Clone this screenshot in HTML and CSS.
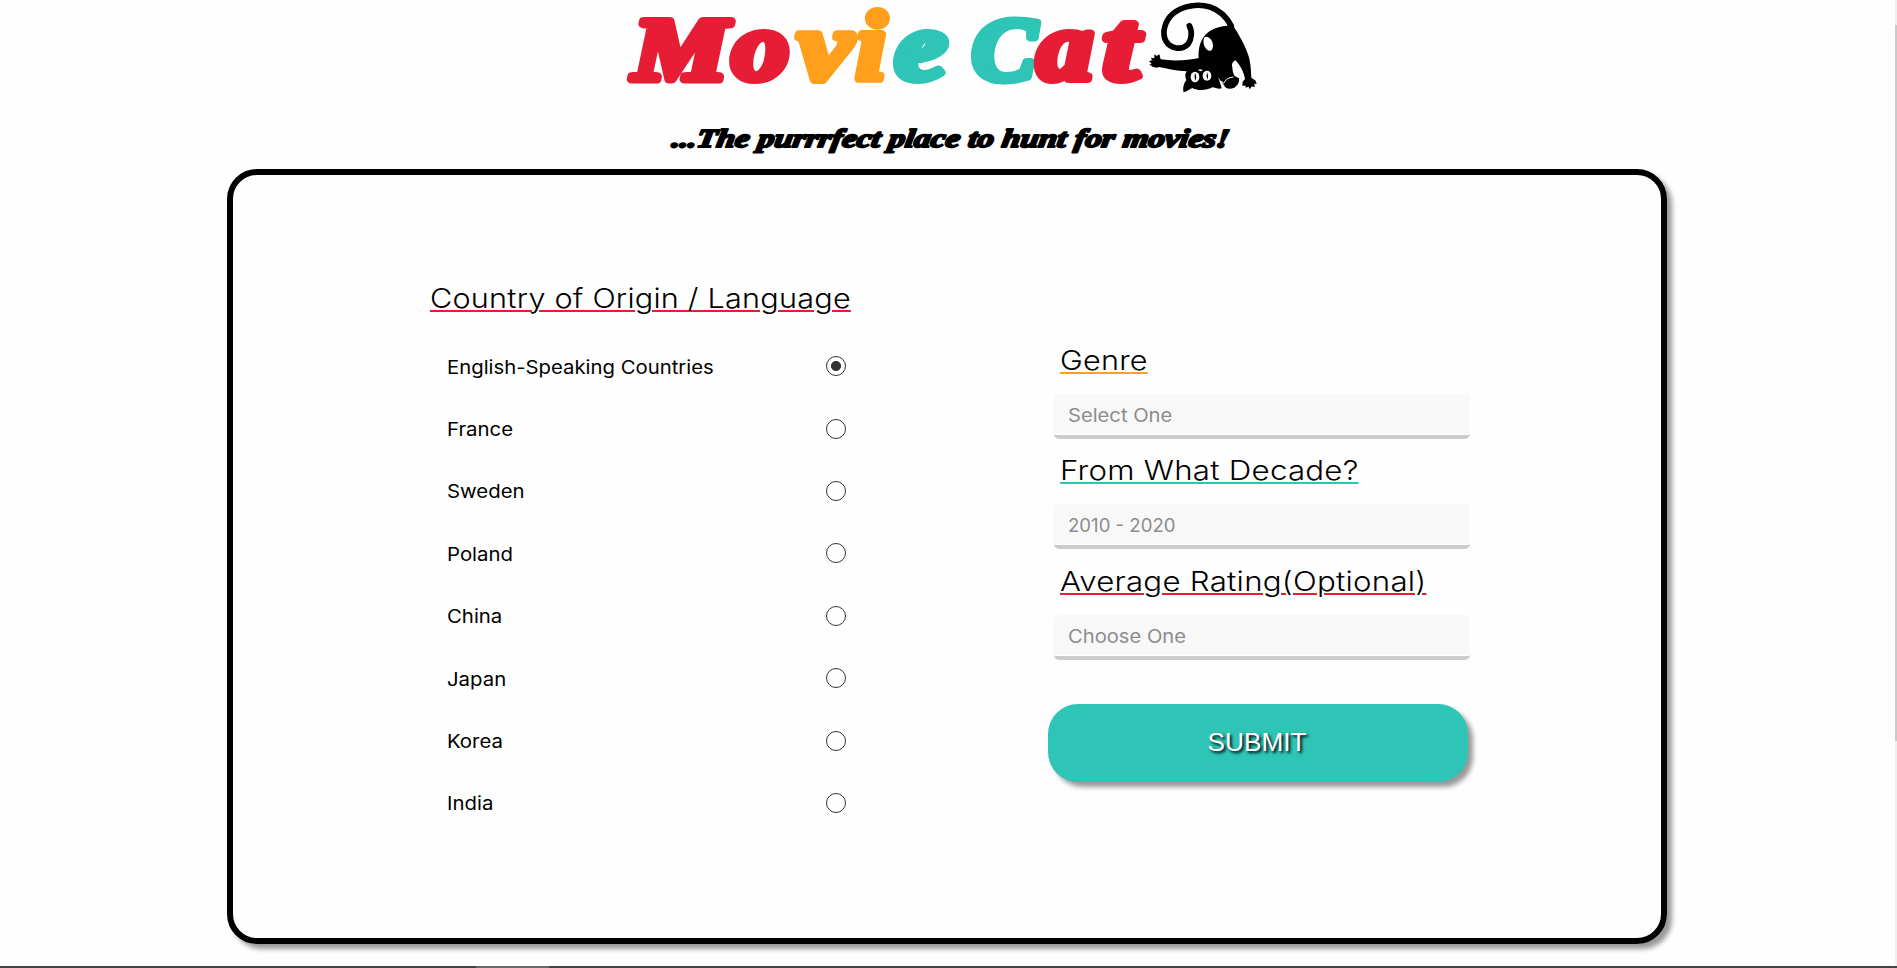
FILE: index.html
```html
<!DOCTYPE html>
<html lang="en">
<head>
<meta charset="utf-8">
<title>Movie Cat</title>
<link rel="stylesheet" href="styles.css">
</head>
<body>
<header class="header">
  <div class="brand">
    <svg class="wordmark" viewBox="620 0 520 120" width="520" height="120" role="img" aria-label="Movie Cat">
      <g class="letters" text-anchor="start">
        <text class="red cap" x="633" y="79" textLength="95" lengthAdjust="spacingAndGlyphs">M</text>
        <text class="red low" x="732" y="79" textLength="57" lengthAdjust="spacingAndGlyphs">o</text>
        <text class="orange low" x="798" y="79" textLength="54" lengthAdjust="spacingAndGlyphs">v</text>
        <text class="orange low" x="856" y="79" textLength="30" lengthAdjust="spacingAndGlyphs">i</text>
        <text class="teal low" x="895" y="79" textLength="52" lengthAdjust="spacingAndGlyphs">e</text>
        <text class="teal cap" x="972" y="79" textLength="64" lengthAdjust="spacingAndGlyphs">C</text>
        <text class="red low" x="1037" y="79" textLength="56" lengthAdjust="spacingAndGlyphs">a</text>
        <text class="red low" x="1103" y="79" textLength="35" lengthAdjust="spacingAndGlyphs">t</text>
      </g>
    </svg>
    <svg class="cat" viewBox="0 0 375 300" width="125" height="100" aria-hidden="true">
      <path d="M148 77C158 96 154 120 144 133C124 153 91 145 78 124C64 98 75 62 99 41C128 17 174 10 210 21C241 31 262 55 274 78" fill="none" stroke="#000" stroke-width="17" stroke-linecap="round"/>
      <path d="M262 55C292 90 317 140 327 172C333 198 333 216 334 233L347 242L350 252L343 251L344 262L336 259L329 268L326 260L316 263L318 257L307 257L308 245L315 237C311 213 298 193 286 181C279 185 274 191 277 202C278 214 279 220 285 229L297 235C299 246 293 257 283 263C269 269 255 266 252 256L234 232C239 243 242 254 245 265C235 269 226 262 217 262C199 272 174 273 157 264C148 268 141 274 131 277C127 264 132 249 139 240C134 230 135 222 140 214C111 213 82 206 57 201C48 206 36 201 28 193L35 191L27 184L36 181L33 173L43 175L43 163L50 168L58 163L62 178C101 184 145 181 176 174C174 132 187 83 262 77Z" fill="#000"/>
      <path d="M192 113C199 106 211 114 216 124C223 140 217 156 207 152C194 147 187 129 192 113Z" fill="#fefefe"/>
      <ellipse cx="165" cy="231" rx="13" ry="16" fill="#fefefe"/><ellipse cx="201" cy="227" rx="13" ry="15" fill="#fefefe"/>
      <path d="M166 219Q171 230 167 242Q161 230 166 219M201 216Q206 226 203 239Q197 227 201 216Z"/>
      <path d="M174 211Q181 204 188 212L182 214Z" fill="#fefefe"/>
      <path d="M243 243L251 250Q259 233 280 231" fill="none" stroke="#fefefe" stroke-width="3"/>
    </svg>
  </div>
  <svg class="tagline" viewBox="665 120 580 40" width="580" height="40">
    <text transform="translate(671 146.500) skewX(-9)" textLength="557" lengthAdjust="spacingAndGlyphs">...The purrrfect place to hunt for movies!</text>
  </svg>
</header>
<main class="card">
  <section class="origin">
    <h2 class="heading red-line origin-title">Country of Origin / Language</h2>
    <div class="options">
      <label class="option"><span class="first">English-Speaking Countries</span><i class="radio checked"></i></label>
      <label class="option"><span>France</span><i class="radio"></i></label>
      <label class="option"><span>Sweden</span><i class="radio"></i></label>
      <label class="option"><span>Poland</span><i class="radio"></i></label>
      <label class="option"><span>China</span><i class="radio"></i></label>
      <label class="option"><span>Japan</span><i class="radio"></i></label>
      <label class="option"><span>Korea</span><i class="radio"></i></label>
      <label class="option"><span>India</span><i class="radio"></i></label>
    </div>
  </section>
  <section class="filters">
    <div class="field"><h2 class="heading orange-line">Genre</h2><div class="select"><span>Select One</span></div></div>
    <div class="field"><h2 class="heading teal-line wide">From What Decade?</h2><div class="select"><span class="digits">2010 - 2020</span></div></div>
    <div class="field"><h2 class="heading red-line wide">Average Rating(Optional)</h2><div class="select"><span>Choose One</span></div></div>
    <button class="submit" type="button">SUBMIT</button>
  </section>
</main>
<div class="scroll-y"></div>
<div class="scroll-x"></div>
</body>
</html>
```
FILE: styles.css
```css
* { box-sizing: border-box; }
body {
  margin: 0;
  height: 968px;
  position: relative;
  overflow: hidden;
  background: #fefefe;
  color: #000;
  font-family: Inter, "Noto Sans", sans-serif;
}
.header { height: 169px; }
.brand { display: flex; height: 120px; padding-left: 620px; }
.wordmark, .cat { display: block; flex: none; overflow: visible; }
.letters, .tagline {
  font-family: "Liberation Serif", serif;
  font-weight: 700;
  font-style: italic;
  stroke-linejoin: round;
}
.letters { stroke-width: 8px; }
.cap { font-size: 88px; }
.low { font-size: 97px; }
.red { fill: #e71d36; stroke: #e71d36; }
.orange { fill: #ff9f1c; stroke: #ff9f1c; }
.teal { fill: #2ec4b6; stroke: #2ec4b6; }
.tagline { display: block; margin-left: 665px; font-size: 26px; fill: #000; stroke: #000; stroke-width: 2px; overflow: visible; }
.card {
  display: flex;
  width: 1440px;
  height: 775px;
  margin-left: 227px;
  border: 6px solid #000;
  border-radius: 30px;
  box-shadow: 5px 5px 5px rgba(0, 0, 0, .4);
}
.origin { width: 421px; margin-left: 197px; padding-top: 105px; }
.heading {
  width: max-content;
  margin: 0;
  height: 36px;
  font-size: 27.6px;
  font-weight: 300;
  line-height: 36px;
  letter-spacing: .2px;
  white-space: nowrap;
  text-decoration: underline;
  text-decoration-thickness: 2px;
  text-underline-offset: 2px;
  transform: scaleX(1.109);
  transform-origin: left;
}
.wide { transform: scaleX(1.133); }
.red-line { text-decoration-color: #e71d36; }
.orange-line { text-decoration-color: #ff9f1c; }
.teal-line { text-decoration-color: #2ec4b6; }
.options { margin: 20px 5px 0 17px; }
.option { display: flex; height: 62.4px; align-items: center; justify-content: space-between; font-size: 18.6px; font-weight: 400; }
.option span, .select span { display: inline-block; transform: scaleX(1.095); transform-origin: left; }
.option span { position: relative; top: -.5px; }
.option .first { transform: scaleX(1.092); }
.radio { position: relative; top: -1px; width: 20px; height: 20px; border: 1px solid #333; border-radius: 50%; }
.checked { background: radial-gradient(circle, #333 4.7px, transparent 5.3px); }
.filters { width: 422px; margin-left: 197px; padding-top: 167px; }
.field { height: 110.4px; padding-left: 6px; }
.field .heading { margin-left: 6px; }
.select {
  width: 416px;
  height: 45px;
  margin-top: 16px;
  padding-left: 14px;
  border-bottom: 4px solid #ccc;
  border-radius: 5px;
  background: linear-gradient(#f8f8f8 40px, #fefefe 40px);
  color: #8c8c8c;
  font-size: 18.6px;
  line-height: 43px;
}
.select span { transform: scaleX(1.085); }
.select .digits { transform: scaleX(1); }
.submit {
  display: block;
  width: 420px;
  height: 78px;
  margin-top: 31px;
  padding: 0 2px 2px 0;
  border: 0;
  border-radius: 30px;
  background: #2ec4b6;
  box-shadow: 5px 5px 5px rgba(0, 0, 0, .4);
  color: #fff;
  font: 26.2px/76px "Liberation Sans", sans-serif;
  text-shadow: 2px 2px 3px #000;
}
.scroll-y, .scroll-x { position: absolute; right: 0; }
.scroll-y { top: 0; width: 2px; height: 966px; background: linear-gradient(#f0f0f0 25px, #c9c9c9 25px 741px, #f0f0f0 741px); }
.scroll-x { bottom: 0; left: 0; height: 2px; background: linear-gradient(90deg, #444 476px, #686868 476px 549px, #444 549px); }
```
